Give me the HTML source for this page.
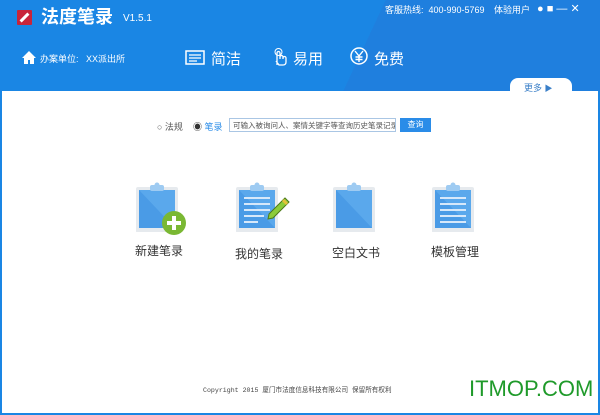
<!DOCTYPE html>
<html><head><meta charset="utf-8"><style>
*{margin:0;padding:0;box-sizing:border-box}
body{width:600px;height:415px;overflow:hidden;background:#fff;font-family:"Liberation Sans","Noto Sans CJK SC",sans-serif;position:relative}
.hd{position:absolute;left:0;top:0;width:600px;height:92px;background:linear-gradient(115deg,#1a86e4 0%,#1a86e4 60%,#1f7fde 60%,#1f7fde 100%)}
.body{position:absolute;left:0;top:91px;width:600px;height:324px;background:#fff;border:2px solid #1a86e4;border-top:none}
.t{position:absolute;color:#fff;white-space:nowrap}
.more{position:absolute;left:510px;top:78px;width:62px;height:15px;background:#fff;border-radius:8px 8px 0 0;font-size:9px;color:#3a7fc8;padding:3px 0 0 14px}
.clip{position:absolute;width:44px;height:50px}
.lbl{position:absolute;font-size:12px;color:#333;white-space:nowrap}
</style></head><body>
<div class="hd"></div>
<div style="position:absolute;left:17px;top:10px;width:15px;height:15px;background:#c8243a;border-radius:1px"></div>
<div style="position:absolute;left:19px;top:16px;width:11px;height:3px;background:#fff;transform:rotate(-45deg)"></div>
<div class="t" style="left:41px;top:6px;font-size:18px;font-weight:bold;line-height:22px">法度笔录</div>
<div class="t" style="left:123px;top:13px;font-size:10px">V1.5.1</div>
<div class="t" style="left:385px;top:3px;font-size:9px">客服热线:&nbsp; 400-990-5769</div>
<div class="t" style="left:494px;top:3px;font-size:9px">体验用户</div>
<div class="t" style="left:537px;top:2px;font-size:11px">● ■ — ✕</div>
<svg style="position:absolute;left:22px;top:51px" width="14" height="13" viewBox="0 0 14 13"><path d="M7 0L0 7h2v6h4V9h2v4h4V7h2z" fill="#fff"/></svg>
<div class="t" style="left:40px;top:52px;font-size:9px">办案单位:&nbsp;&nbsp; XX派出所</div>
<svg style="position:absolute;left:185px;top:50px" width="20" height="15"><rect x="1" y="1" width="18" height="13" fill="none" stroke="#fff" stroke-width="1.5"/><path d="M4 5h12M4 8h12M4 11h8" stroke="#fff" stroke-width="1.2"/></svg>
<div class="t" style="left:211px;top:48px;font-size:15px">简洁</div>
<svg style="position:absolute;left:273px;top:47px" width="14" height="20"><path d="M4 18V6a1.5 1.5 0 013 0v6 M7 10a1.5 1.5 0 013 0v2M10 11a1.5 1.5 0 013 0v4c0 2-1 3-3 3H6L3 14" fill="none" stroke="#fff" stroke-width="1.3"/><circle cx="5.5" cy="5" r="3.5" fill="none" stroke="#fff" stroke-width="1"/></svg>
<div class="t" style="left:293px;top:48px;font-size:15px">易用</div>
<svg style="position:absolute;left:350px;top:47px" width="18" height="18"><circle cx="9" cy="9" r="8" fill="none" stroke="#fff" stroke-width="1.5"/><path d="M5 4l4 5 4-5M9 9v6M5.5 10h7M5.5 12.5h7" stroke="#fff" stroke-width="1.4" fill="none"/></svg>
<div class="t" style="left:374px;top:48px;font-size:15px">免费</div>
<div class="body"></div>
<div class="more">更多 <span style="font-size:8px">▶</span></div>
<div style="position:absolute;left:157px;top:120px;font-size:9px;color:#555;white-space:nowrap">○ 法规&nbsp;&nbsp;&nbsp; <span style="color:#333">◉</span> <span style="color:#2a8ce8">笔录</span></div>
<div style="position:absolute;left:229px;top:118px;width:167px;height:14px;border:1px solid #aac6e4;font-size:7.5px;color:#555;padding:1px 3px;white-space:nowrap;overflow:hidden">可输入被询问人、案情关键字等查询历史笔录记录</div>
<div style="position:absolute;left:400px;top:118px;width:31px;height:14px;background:#2a8ce8;color:#fff;font-size:8px;text-align:center;line-height:14px">查询</div>

<svg class="clip" style="left:136px;top:182px" viewBox="0 0 44 50"><rect x="0" y="5" width="42" height="46" rx="2" fill="#e6eaee"/><rect x="3" y="8" width="36" height="38" fill="#4a9be6"/><path d="M3 8h36v38z" fill="#5aa8ec"/><rect x="14" y="3" width="14" height="6" rx="2" fill="#9ecbf2"/><circle cx="21" cy="3" r="2.5" fill="#9ecbf2"/></svg>
<svg style="position:absolute;left:161px;top:210px" width="26" height="26"><circle cx="13" cy="13" r="12" fill="#7ab833"/><path d="M13 6v14M6 13h14" stroke="#fff" stroke-width="4"/></svg>
<div class="lbl" style="left:135px;top:242px">新建笔录</div>

<svg class="clip" style="left:236px;top:182px" viewBox="0 0 44 50"><rect x="0" y="5" width="42" height="46" rx="2" fill="#e6eaee"/><rect x="3" y="8" width="36" height="38" fill="#4a9be6"/><path d="M3 8h36v38z" fill="#5aa8ec"/><rect x="14" y="3" width="14" height="6" rx="2" fill="#9ecbf2"/><circle cx="21" cy="3" r="2.5" fill="#9ecbf2"/><path d="M8 16h26M8 22h26M8 28h26M8 34h20M8 40h14" stroke="#d6e8fa" stroke-width="2"/></svg>
<svg style="position:absolute;left:263px;top:196px" width="28" height="28"><path d="M22 2l4 4L10 22l-5 1 1-5z" fill="#8ccc3a" stroke="#4d7a1a" stroke-width="1"/><path d="M20 4l4 4" stroke="#e5c23a" stroke-width="3"/></svg>
<div class="lbl" style="left:235px;top:245px">我的笔录</div>

<svg class="clip" style="left:333px;top:182px" viewBox="0 0 44 50"><rect x="0" y="5" width="42" height="46" rx="2" fill="#e6eaee"/><rect x="3" y="8" width="36" height="38" fill="#4a9be6"/><path d="M3 8h36v38z" fill="#5aa8ec"/><rect x="14" y="3" width="14" height="6" rx="2" fill="#9ecbf2"/><circle cx="21" cy="3" r="2.5" fill="#9ecbf2"/></svg>
<div class="lbl" style="left:332px;top:244px">空白文书</div>

<svg class="clip" style="left:432px;top:182px" viewBox="0 0 44 50"><rect x="0" y="5" width="42" height="46" rx="2" fill="#e6eaee"/><rect x="3" y="8" width="36" height="38" fill="#4a9be6"/><path d="M3 8h36v38z" fill="#5aa8ec"/><rect x="14" y="3" width="14" height="6" rx="2" fill="#9ecbf2"/><circle cx="21" cy="3" r="2.5" fill="#9ecbf2"/><path d="M8 16h26M8 22h26M8 28h26M8 34h26M8 40h26" stroke="#d6e8fa" stroke-width="2"/></svg>
<div class="lbl" style="left:431px;top:243px">模板管理</div>

<div style="position:absolute;left:203px;top:384px;font-size:6.6px;color:#444;white-space:nowrap;font-family:'Liberation Mono','Noto Sans CJK SC',monospace">Copyright 2015 厦门市法度信息科技有限公司 保留所有权利</div>
<div style="position:absolute;left:469px;top:377px;font-size:22px;color:#1f9a2a;white-space:nowrap;line-height:24px">ITMOP.COM</div>
</body></html>
